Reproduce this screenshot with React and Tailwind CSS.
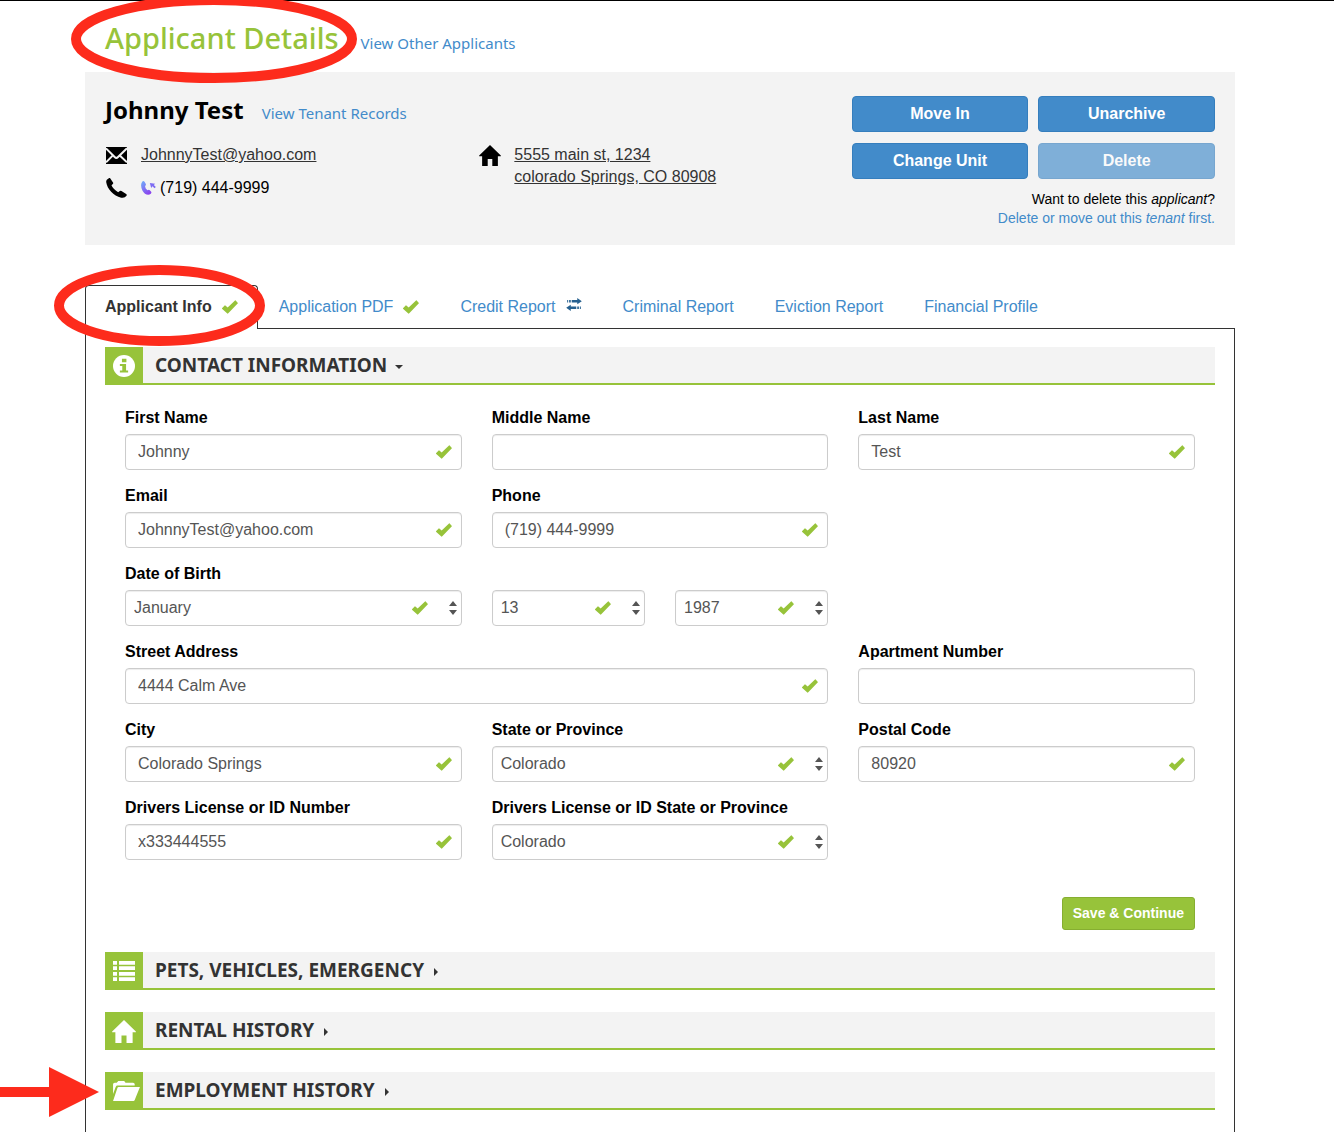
import { useState } from "react";

const MONTHS = ["January", "February", "March", "April", "May", "June", "July", "August", "September", "October", "November", "December"];
const STATES = ["Colorado", "Arizona", "Kansas", "New Mexico", "Utah", "Wyoming"];

function Check({ className = "" }) {
  return (
    <svg viewBox="0 0 48 41" className={`w-4 h-3.5 shrink-0 ${className}`} fill="#97c33a" aria-hidden="true">
      <path d="M0 24 8 16Q9 15 10 16L17 22 39 1Q40 0 41 1L47 8Q48 9 47 10L18 40Q17 41 16 40L0 26Q-1 25 0 24Z" />
    </svg>
  );
}

function HomeIcon({ className = "" }) {
  return (
    <svg viewBox="0 0 66 64" className={className} fill="currentColor" aria-hidden="true">
      <path d="M33 0 66 32V34H57V64H40V43H26V64H9V34H0V32Z" />
    </svg>
  );
}

function InfoIcon() {
  return (
    <svg viewBox="0 0 64 64" className="w-[22px] h-[22px]" aria-hidden="true">
      <circle cx="32" cy="32" r="32" fill="#fff" />
      <path d="M26 11h13v10H26zM20 26h18v19h6v6H20v-6h7V32h-7z" fill="#97c33a" />
    </svg>
  );
}

function ListIcon() {
  return (
    <svg viewBox="0 0 66 60" className="w-[22px] h-5" fill="#fff" aria-hidden="true">
      {[0, 16, 33, 49].map((y) => (
        <path key={y} d={`M0 ${y}h12v11H0zM18 ${y}h48v11H18z`} />
      ))}
    </svg>
  );
}

function FolderIcon() {
  return (
    <svg viewBox="0 0 82 61" className="w-[27px] h-5 ml-1 shrink-0" fill="#fff" aria-hidden="true">
      <path d="M0 10Q0 5 5 5H11L16 0H34L38 5H61Q66 5 66 10V14H13Q10 14 8 18L0 40Z" />
      <path d="M17 18H82L66 58Q65 61 62 61H0L13 22Q14 18 17 18Z" />
    </svg>
  );
}

function MailIcon() {
  return (
    <svg viewBox="0 0 63 51" className="w-[21px] h-[17px]" aria-hidden="true">
      <path d="M0 0H63V51H0Z" fill="#000" />
      <path d="M0 4 26 30Q31 35 36 30L63 4M0 46 20 26M63 46 42 26" fill="none" stroke="#f3f3f3" strokeWidth="6" />
    </svg>
  );
}

function PhoneIcon() {
  return (
    <svg viewBox="0 0 62 60" className="w-[21px] h-5" aria-hidden="true">
      <path d="M2 5 9 0Q11-1 13 2L21 14Q22 16 20 18L16 22Q20 32 36 43L41 39Q43 37 46 39L60 48Q63 50 61 53L56 58Q52 60 45 59C22 54 3 33 0 12Q0 8 2 5Z" fill="#000" />
    </svg>
  );
}

function CallIcon() {
  return (
    <svg viewBox="0 0 44 42" className="w-[15px] h-3.5 shrink-0" aria-hidden="true">
      <defs>
        <linearGradient id="call" x1="0" y1="0" x2="0.6" y2="1">
          <stop offset="0" stopColor="#6fb1fa" />
          <stop offset="1" stopColor="#8a45ee" />
        </linearGradient>
      </defs>
      <path d="M3 2Q7-2 10 2L14 9Q15 12 12 15Q11 22 19 28Q23 25 26 28L30 32Q32 35 29 38C21 45 9 39 4 29Q-4 12 3 2Z" fill="url(#call)" />
      <path d="M26 6 42 8 38 12 44 18 40 22 34 16 30 21Z" fill="#7d6cf2" />
    </svg>
  );
}

function TransferIcon() {
  return (
    <svg viewBox="0 0 48 40" className="w-4 h-[13px] mb-1 shrink-0" fill="#26608f" aria-hidden="true">
      <path d="M3 6h3v8H3zM9 6h5v8H9zM17 6H34V0L48 10 34 19V14H17zM45 26h-3v8h3zM39 26h-5v8h5zM31 26H14V21L0 30 14 40V34H31z" />
    </svg>
  );
}

function Caret({ open }) {
  return open ? (
    <svg viewBox="0 0 8 4" className="w-2 h-1 mt-1 ml-2" fill="#333" aria-hidden="true">
      <path d="M0 0H8L4 4Z" />
    </svg>
  ) : (
    <svg viewBox="0 0 4 8" className="w-1 h-2 mt-1 ml-2.5" fill="#333" aria-hidden="true">
      <path d="M0 0V8L4 4Z" />
    </svg>
  );
}

function Section({ title, icon, open, onToggle, marker }) {
  return (
    <h3 className="relative">
      <button
        type="button"
        aria-expanded={open}
        onClick={onToggle}
        className="flex w-full items-center h-[38px] bg-[#f3f3f3] border-b-2 border-[#97c33a] text-left cursor-pointer"
      >
        <span className="flex items-center justify-center w-[38px] h-9 pt-0.5 bg-[#97c33a] text-white">{icon}</span>
        <span className="pl-3 font-['Noto_Sans',sans-serif] text-[19px] font-bold text-[#333]">{title}</span>
        <Caret open={open} />
      </button>
      {marker}
    </h3>
  );
}

function TextField({ id, label, value, type = "text", className = "col-span-2" }) {
  return (
    <div className={className}>
      <label htmlFor={id} className="block mb-1 leading-6 font-bold text-black">{label}</label>
      <div className="relative">
        <input
          id={id}
          type={type}
          defaultValue={value}
          className="block w-full h-9 rounded border border-[#ccc] bg-white px-3 text-[#555] shadow-[inset_0_1px_1px_rgba(0,0,0,0.075)]"
        />
        {value && <Check className="absolute right-2.5 top-[11px]" />}
      </div>
    </div>
  );
}

function SelectField({ id, label, name, options, className = "col-span-2" }) {
  return (
    <div className={className}>
      {label && <label htmlFor={id} className="block mb-1 leading-6 font-bold text-black">{label}</label>}
      <div className="relative">
        <select
          id={id}
          aria-label={name}
          className="block w-full h-9 appearance-none rounded border border-[#ccc] bg-white pl-2 pr-14 text-[#555] shadow-[inset_0_1px_1px_rgba(0,0,0,0.075)]"
        >
          {options.map((o) => (
            <option key={o}>{o}</option>
          ))}
        </select>
        <Check className="absolute right-[34px] top-[11px] pointer-events-none" />
        <svg viewBox="0 0 8 14" className="absolute right-[5px] top-[11px] w-2 h-3.5 pointer-events-none" fill="#555" aria-hidden="true">
          <path d="M0 5H8L4 0ZM0 9H8L4 14Z" />
        </svg>
      </div>
    </div>
  );
}

function Tab({ children }) {
  return (
    <a href="#" className="flex items-center gap-2.5 h-[43px] pl-[19px] pr-5 border border-transparent text-[#428bca]">
      {children}
    </a>
  );
}

function App() {
  const [open, setOpen] = useState("contact");
  const toggle = (name) => setOpen(open === name ? "" : name);

  const actionButton = "h-9 rounded border border-[#357ebd] bg-[#428bca] text-white font-bold";

  return (
    <div className="min-h-screen flex flex-col border-t border-black bg-white pr-3.5 font-['Liberation_Sans',Arial,sans-serif] text-base text-black">
      <div className="w-full max-w-[1150px] mx-auto flex flex-col grow">

        {/* Page title */}
        <header className="flex items-baseline gap-[22px] h-[71px] pt-[15px] pl-5">
          <h1 className="relative font-['Noto_Sans',sans-serif] text-[29px] leading-[44px] font-medium text-[#97c33a]">
            Applicant Details
            <svg viewBox="0 0 286 88" className="absolute -left-[34px] -top-[21px] w-[286px] h-[88px] max-w-none pointer-events-none" aria-hidden="true">
              <ellipse cx="143" cy="44" rx="138" ry="39" fill="none" stroke="#fd2b1c" strokeWidth="10" />
            </svg>
          </h1>
          <a href="#" className="font-['Noto_Sans',sans-serif] text-[15px] text-[#428bca]">View Other Applicants</a>
        </header>

        {/* Applicant summary */}
        <section className="grid grid-cols-3 gap-2.5 bg-[#f3f3f3] px-5 pt-6 pb-[17px]">
          <div className="col-span-2">
            <div className="flex items-baseline gap-[18px] h-9 mb-3">
              <h2 className="font-['Noto_Sans',sans-serif] text-2xl leading-7 font-bold">Johnny Test</h2>
              <a href="#" className="font-['Noto_Sans',sans-serif] text-[15px] text-[#428bca]">View Tenant Records</a>
            </div>
            <div className="grid grid-cols-2 gap-2.5">
              <div className="flex flex-col gap-[11px] leading-[22px]">
                <div className="flex items-center">
                  <span className="w-9 pl-px"><MailIcon /></span>
                  <a href="#" className="text-[#333] underline">JohnnyTest@yahoo.com</a>
                </div>
                <div className="flex items-center">
                  <span className="w-9 pl-px"><PhoneIcon /></span>
                  <CallIcon />
                  <span className="pl-1">(719) 444-9999</span>
                </div>
              </div>
              <div className="flex items-start leading-[22px]">
                <span className="w-9 pt-px pl-px"><HomeIcon className="w-[22px] h-[21px]" /></span>
                <a href="#" className="text-[#333] underline">
                  5555 main st, 1234<br />
                  colorado Springs, CO 80908
                </a>
              </div>
            </div>
          </div>

          <div>
            <div className="grid grid-cols-2 gap-x-2.5 gap-y-[11px] mb-[11px]">
              <button type="button" className={actionButton}>Move In</button>
              <button type="button" className={actionButton}>Unarchive</button>
              <button type="button" className={actionButton}>Change Unit</button>
              <button type="button" disabled className={`${actionButton} opacity-65`}>Delete</button>
            </div>
            <p className="text-right text-sm leading-[19px]">
              Want to delete this <em>applicant</em>?<br />
              <a href="#" className="text-[#428bca]">Delete or move out this <em>tenant</em> first.</a>
            </p>
          </div>
        </section>

        {/* Tabs */}
        <nav className="flex mt-10">
          <a href="#" className="relative z-10 -mb-px mr-px flex items-center gap-2.5 h-11 pl-[19px] pr-[19px] pb-0.5 border border-b-0 border-[#333] rounded-t bg-white font-bold text-[#333]">
            Applicant Info
            <Check />
            <svg viewBox="0 0 211 81" className="absolute -left-8 -top-[21px] w-[211px] h-[81px] max-w-none pointer-events-none" aria-hidden="true">
              <ellipse cx="105.500" cy="40.500" rx="100.500" ry="35.500" fill="none" stroke="#fd2b1c" strokeWidth="10" />
            </svg>
          </a>
          <Tab>Application PDF <Check /></Tab>
          <Tab>Credit Report <TransferIcon /></Tab>
          <Tab>Criminal Report</Tab>
          <Tab>Eviction Report</Tab>
          <Tab>Financial Profile</Tab>
        </nav>

        <main className="grow border border-b-0 border-[#333] px-[19px] pt-[18px] pb-[22px] flex flex-col gap-[22px]">
          <Section title="CONTACT INFORMATION" icon={<InfoIcon />} open={open === "contact"} onToggle={() => toggle("contact")} />

          {open === "contact" && (
            <form onSubmit={(e) => e.preventDefault()} className="-mt-px px-5">
              <div className="grid grid-cols-6 items-end gap-x-[30px] gap-y-3.5">
                <TextField id="first" label="First Name" value="Johnny" />
                <TextField id="middle" label="Middle Name" />
                <TextField id="last" label="Last Name" value="Test" />

                <TextField id="email" label="Email" type="email" value="JohnnyTest@yahoo.com" />
                <TextField id="phone" label="Phone" type="tel" value="(719) 444-9999" />

                <SelectField id="month" label="Date of Birth" options={MONTHS} className="col-span-2 col-start-1" />
                <SelectField id="day" name="Day of birth" options={["13", "14", "15"]} className="col-span-1" />
                <SelectField id="year" name="Year of birth" options={["1987", "1988", "1989"]} className="col-span-1" />

                <TextField id="street" label="Street Address" value="4444 Calm Ave" className="col-span-4 col-start-1" />
                <TextField id="apartment" label="Apartment Number" />

                <TextField id="city" label="City" value="Colorado Springs" />
                <SelectField id="state" label="State or Province" options={STATES} />
                <TextField id="postal" label="Postal Code" value="80920" />

                <TextField id="license" label="Drivers License or ID Number" value="x333444555" />
                <SelectField id="licenseState" label="Drivers License or ID State or Province" options={STATES} />
              </div>

              <div className="flex justify-end mt-[37px]">
                <button type="submit" className="h-[33px] px-2.5 pb-0.5 rounded-[3px] border border-[#86ae31] bg-[#97c33a] text-sm font-bold text-white">
                  Save &amp; Continue
                </button>
              </div>
            </form>
          )}

          <Section title="PETS, VEHICLES, EMERGENCY" icon={<ListIcon />} open={open === "pets"} onToggle={() => toggle("pets")} />
          <Section title="RENTAL HISTORY" icon={<HomeIcon className="w-6 h-[23px]" />} open={open === "rental"} onToggle={() => toggle("rental")} />
          <Section
            title="EMPLOYMENT HISTORY"
            icon={<FolderIcon />}
            open={open === "employment"}
            onToggle={() => toggle("employment")}
            marker={
              <svg viewBox="0 0 99 50" className="absolute right-full mr-1.5 -top-[5px] w-[99px] h-[50px] max-w-none" fill="#fd2b1c" aria-hidden="true">
                <path d="M0 20H49V0L99 25 49 50V30H0Z" />
              </svg>
            }
          />
        </main>
      </div>
    </div>
  );
}

export default App;
